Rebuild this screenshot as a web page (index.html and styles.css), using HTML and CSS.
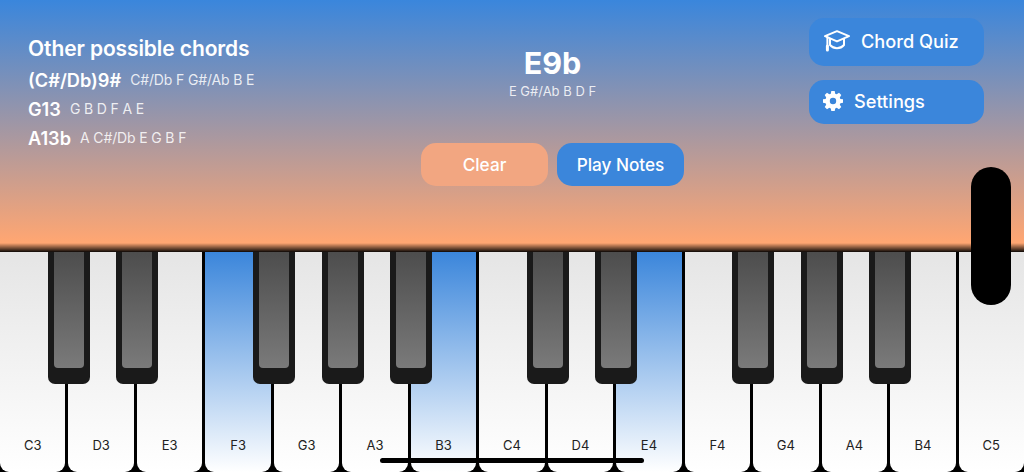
FILE: index.html
```html
<!DOCTYPE html>
<html lang="en">
<head>
<meta charset="utf-8">
<title>Chord Finder</title>
<link rel="stylesheet" href="styles.css">
</head>
<body>
<div class="app">
  <header class="top">
    <section class="others">
      <h2 class="others-title">Other possible chords</h2>
      <div class="other-row"><span class="other-name">(C#/Db)9#</span><span class="other-notes">C#/Db F G#/Ab B E</span></div>
      <div class="other-row"><span class="other-name">G13</span><span class="other-notes">G B D F A E</span></div>
      <div class="other-row"><span class="other-name">A13b</span><span class="other-notes">A C#/Db E G B F</span></div>
    </section>
    <section class="current">
      <h1 class="chord">E9b</h1>
      <p class="chord-notes">E G#/Ab B D F</p>
      <div class="actions">
        <button class="pill pill-clear">Clear</button>
        <button class="pill pill-play">Play Notes</button>
      </div>
    </section>
    <nav class="side">
      <button class="side-btn side-quiz">
        <svg class="icon-cap" viewBox="0 0 26 22" fill="none" stroke="#fff" stroke-width="2" stroke-linejoin="round" stroke-linecap="round"><path d="M13 1.200 25 6.200 13 11.400 1 6.200Z"/><path d="M6 9v6c2 2.200 4.500 3.200 7 3.200s5.200-1 7-3.200V9"/><path d="M3.400 7.300V16"/><path d="M3.400 16v4" stroke-width="3"/></svg>
        <span>Chord Quiz</span>
      </button>
      <button class="side-btn side-settings">
        <svg class="icon-gear" viewBox="0 0 20 20"><path fill="#fff" fill-rule="evenodd" d="M8.300 0h3.400l.5 2.700 1.500.6L16 1.800l2.300 2.300-1.500 2.300.6 1.500 2.600.4v3.400l-2.600.5-.6 1.500 1.500 2.200-2.300 2.400-2.300-1.500-1.500.6-.5 2.600H8.300l-.5-2.600-1.500-.6L4 18.300l-2.300-2.400 1.500-2.200-.6-1.500L0 11.700V8.300l2.600-.4.6-1.500-1.500-2.300L4 1.800l2.300 1.500 1.500-.6ZM10 6.800a3.200 3.200 0 1 0 0 6.400 3.200 3.200 0 0 0 0-6.400Z"/></svg>
        <span>Settings</span>
      </button>
    </nav>
  </header>
  <main class="piano">
    <div class="whites">
      <div class="white"><span>C3</span></div>
      <div class="white"><span>D3</span></div>
      <div class="white"><span>E3</span></div>
      <div class="white on"><span>F3</span></div>
      <div class="white"><span>G3</span></div>
      <div class="white"><span>A3</span></div>
      <div class="white on"><span>B3</span></div>
      <div class="white"><span>C4</span></div>
      <div class="white"><span>D4</span></div>
      <div class="white on"><span>E4</span></div>
      <div class="white"><span>F4</span></div>
      <div class="white"><span>G4</span></div>
      <div class="white"><span>A4</span></div>
      <div class="white"><span>B4</span></div>
      <div class="white"><span>C5</span></div>
    </div>
    <div class="blacks">
      <div class="slot"><div class="black"></div></div>
      <div class="slot"><div class="black"></div></div>
      <div class="slot"></div>
      <div class="slot"><div class="black"></div></div>
      <div class="slot"><div class="black"></div></div>
      <div class="slot"><div class="black"></div></div>
      <div class="slot"></div>
      <div class="slot"><div class="black"></div></div>
      <div class="slot"><div class="black"></div></div>
      <div class="slot"></div>
      <div class="slot"><div class="black"></div></div>
      <div class="slot"><div class="black"></div></div>
      <div class="slot"><div class="black"></div></div>
      <div class="slot"></div>
    </div>
  </main>
  <div class="notch"></div>
  <div class="home-bar"></div>
</div>
</body>
</html>
```
FILE: styles.css
```css
* { box-sizing: border-box; }
html, body { margin: 0; height: 100%; }
body { font-family: Inter, "Liberation Sans", sans-serif; background: #000; overflow: hidden; }
.app { position: relative; width: 1024px; height: 472px; display: flex; flex-direction: column; overflow: hidden; }

.top {
  height: 252px;
  display: grid;
  grid-template-columns: 421px 263px 1fr;
  color: #fff;
  background: linear-gradient(to bottom, #3a86dc 0%, #ffa672 96%);
  position: relative;
}
.top::after {
  content: "";
  position: absolute;
  left: 0; right: 0; bottom: 0;
  height: 9px;
  background: linear-gradient(to bottom, rgba(0,0,0,0), rgba(0,0,0,.95));
}

.others { padding: 37px 0 0 28px; }
.others-title { margin: 0 0 4px; font-size: 21px; line-height: 24px; font-weight: 600; letter-spacing: -.1px; }
.other-row { display: flex; align-items: center; gap: 9px; height: 29px; }
.other-name { font-size: 18.200px; font-weight: 600; }
.other-notes { font-size: 14px; letter-spacing: -.15px; color: rgba(255,255,255,.85); }

.current { display: flex; flex-direction: column; align-items: center; padding-top: 45px; }
.chord { margin: 0; font-size: 30.500px; line-height: 36px; font-weight: 700; }
.chord-notes { margin: 2px 0 0; font-size: 13px; line-height: 17px; color: rgba(255,255,255,.85); }
.actions { display: flex; gap: 9px; margin-top: 43px; }
.pill {
  width: 127px; height: 43px; border: 0; border-radius: 15px;
  font: 500 17.200px Inter, "Liberation Sans", sans-serif; color: #fff;
}
.pill-clear { background: #f2a681; }
.pill-play { background: #3b86db; }

.side { padding: 18px 0 0 125px; display: flex; flex-direction: column; gap: 14px; }
.side-btn {
  width: 175px; border: 0; border-radius: 15px; background: #3b86db; color: #fff;
  font: 500 18.200px Inter, "Liberation Sans", sans-serif;
  display: flex; align-items: center; padding: 0;
}
.side-quiz { height: 48px; padding-left: 15px; gap: 11px; padding-bottom: 3px; }
.side-settings { height: 44px; padding-left: 14px; gap: 11px; padding-bottom: 2px; }
.icon-cap { width: 26px; height: 22px; }
.icon-gear { width: 20px; height: 20px; }

.piano { position: relative; flex: 1; }
.whites { display: flex; height: 100%; margin-right: -3px; background: #000; }
.white {
  flex: 1;
  margin-right: 3px;
  border-radius: 0 0 9px 9px;
  background: linear-gradient(to bottom, #e5e5e5, #fff);
  display: flex; align-items: flex-end; justify-content: center;
  padding-bottom: 19px;
  font-size: 13px; color: #222;
}
.white.on { background: linear-gradient(to bottom, #3b86db, #fff); }
.blacks { position: absolute; left: 34.500px; right: 30.900px; top: 0; display: flex; }
.slot { flex: 1; display: flex; justify-content: center; }
.black {
  width: 42px; height: 132px; background: #1a1a1a;
  border-radius: 0 0 7px 7px;
  padding: 0 6px 16px;
}
.black::before {
  content: ""; display: block; height: 100%;
  background: linear-gradient(to bottom, #4d4d4d, #7a7a7a);
  border-radius: 0 0 4px 4px;
}

.notch { position: absolute; left: 971px; top: 167px; width: 40px; height: 138px; border-radius: 20px; background: #000; }
.home-bar { position: absolute; left: 380px; top: 458px; width: 264px; height: 5px; border-radius: 3px; background: #000; }
```
